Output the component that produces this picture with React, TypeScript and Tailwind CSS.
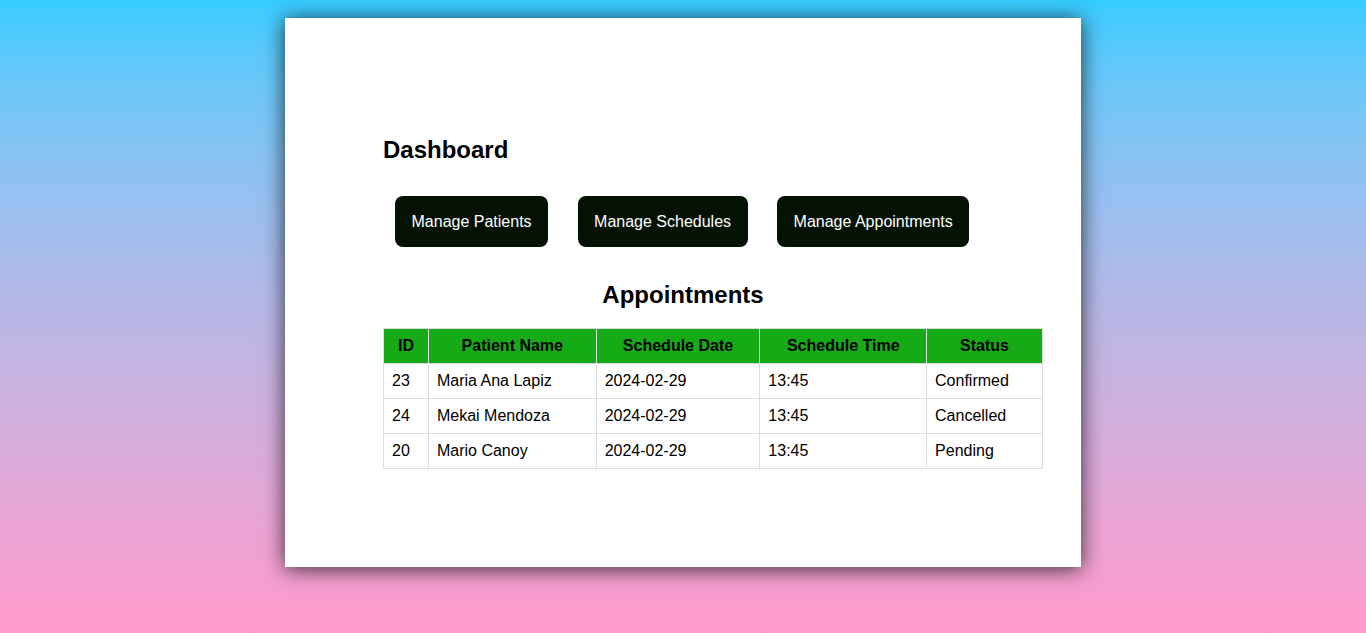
const appointments = [
  { id: 23, name: "Maria Ana Lapiz", date: "2024-02-29", time: "13:45", status: "Confirmed" },
  { id: 24, name: "Mekai Mendoza", date: "2024-02-29", time: "13:45", status: "Cancelled" },
  { id: 20, name: "Mario Canoy", date: "2024-02-29", time: "13:45", status: "Pending" },
];

const menu = ["Manage Patients", "Manage Schedules", "Manage Appointments"];

export default function App() {
  return (
    <div
      className="min-h-screen bg-linear-to-b from-[#33ccff] to-[#ff99cc] pt-[18px] pb-[66px] text-black"
      style={{ fontFamily: '"Liberation Sans", Arial, sans-serif' }}
    >
      {/* Card */}
      <div className="mx-auto w-[796px] h-[549px] bg-white shadow-[0_2px_20px_rgba(0,0,0,0.75)] px-[98px] pt-[118px]">
        <h2 className="text-[24px] leading-[28px] font-bold">Dashboard</h2>

        {/* Buttons */}
        <div className="flex gap-[29.5px] pl-[12px] mt-[32px]">
          {menu.map((label) => (
            <button
              key={label}
              className="bg-[#031203] text-white text-[16px] leading-[19px] px-[16.5px] py-[16px] rounded-[8px]"
            >
              {label}
            </button>
          ))}
        </div>

        <h2 className="text-[24px] leading-[28px] font-bold text-center mt-[34px]">Appointments</h2>

        {/* Table */}
        <table className="mt-[19px] w-[660px] border-collapse text-[16px] leading-[18px]">
          <thead>
            <tr className="bg-[#16ab16]">
              <th className="w-[45px] border border-[#dddddd] px-2 py-[8px] font-bold">ID</th>
              <th className="w-[168px] border border-[#dddddd] px-2 py-[8px] font-bold">Patient Name</th>
              <th className="w-[164px] border border-[#dddddd] px-2 py-[8px] font-bold">Schedule Date</th>
              <th className="w-[167px] border border-[#dddddd] px-2 py-[8px] font-bold">Schedule Time</th>
              <th className="w-[116px] border border-[#dddddd] px-2 py-[8px] font-bold">Status</th>
            </tr>
          </thead>
          <tbody>
            {appointments.map((a) => (
              <tr key={a.id}>
                <td className="border border-[#dddddd] px-2 py-[8px]">{a.id}</td>
                <td className="border border-[#dddddd] px-2 py-[8px]">{a.name}</td>
                <td className="border border-[#dddddd] px-2 py-[8px]">{a.date}</td>
                <td className="border border-[#dddddd] px-2 py-[8px]">{a.time}</td>
                <td className="border border-[#dddddd] px-2 py-[8px]">{a.status}</td>
              </tr>
            ))}
          </tbody>
        </table>
      </div>
    </div>
  );
}
